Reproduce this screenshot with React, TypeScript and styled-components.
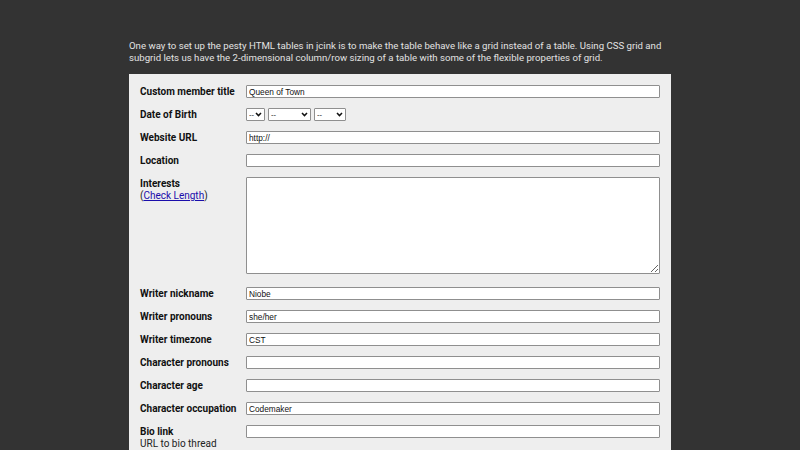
import React from "react";
import styled, { createGlobalStyle } from "styled-components";

const GlobalStyle = createGlobalStyle`
  html, body {
    margin: 0;
    padding: 0;
    background: #333333;
  }
`;

type Field = {
  label: string;
  value?: string;
  note?: string;
};

const topFields: Field[] = [
  { label: "Website URL", value: "http://" },
  { label: "Location" }
];

const bottomFields: Field[] = [
  { label: "Writer nickname", value: "Niobe" },
  { label: "Writer pronouns", value: "she/her" },
  { label: "Writer timezone", value: "CST" },
  { label: "Character pronouns" },
  { label: "Character age" },
  { label: "Character occupation", value: "Codemaker" },
  { label: "Bio link", note: "URL to bio thread" }
];

function Chevron() {
  return (
    <svg width="7" height="5" viewBox="0 0 7 5">
      <path d="M1 1 L3.5 3.6 L6 1" fill="none" stroke="#111" strokeWidth="1.5" />
    </svg>
  );
}

function DateSelect({ width }: { width: number }) {
  return (
    <SelectWrap $w={width}>
      <Select>
        <option>--</option>
      </Select>
      <Arrow>
        <Chevron />
      </Arrow>
    </SelectWrap>
  );
}

function App() {
  return (
    <Page>
      <GlobalStyle />
      <Intro>
        One way to set up the pesty HTML tables in jcink is to make the table
        behave like a grid instead of a table. Using CSS grid and subgrid lets
        us have the 2-dimensional column/row sizing of a table with some of the
        flexible properties of grid.
      </Intro>
      <Panel>
        <Label>Custom member title</Label>
        <TextInput defaultValue="Queen of Town" />

        <Label>Date of Birth</Label>
        <Selects>
          <DateSelect width={19} />
          <DateSelect width={43} />
          <DateSelect width={32} />
        </Selects>

        {topFields.map(f => (
          <React.Fragment key={f.label}>
            <Label>{f.label}</Label>
            <TextInput defaultValue={f.value} />
          </React.Fragment>
        ))}

        <Label $top>
          Interests
          <Note>
            (<LengthLink href="#">Check Length</LengthLink>)
          </Note>
        </Label>
        <TextArea />

        {bottomFields.map(f => (
          <React.Fragment key={f.label}>
            <Label $top={!!f.note}>
              {f.label}
              {f.note && <Note>{f.note}</Note>}
            </Label>
            <TextInput $top={!!f.note} defaultValue={f.value} />
          </React.Fragment>
        ))}
      </Panel>
    </Page>
  );
}

const Page = styled.div`
  width: 542px;
  margin: 0 auto;
  padding-top: 40px;
  font-family: Roboto, "Liberation Sans", sans-serif;
`;

const Intro = styled.p`
  margin: 0 0 11px;
  color: #e2e2e2;
  font-size: 9.65px;
  line-height: 11.5px;
`;

const Panel = styled.div`
  background: #eeeeee;
  padding: 11px 11px 20px;
  display: grid;
  grid-template-columns: 106px 1fr;
  row-gap: 10px;
  align-items: center;
`;

const Label = styled.div<{ $top?: boolean }>`
  font-size: 10px;
  font-weight: 700;
  line-height: 12px;
  color: #111;
  white-space: nowrap;
  align-self: ${p => (p.$top ? "start" : "center")};
  margin-top: ${p => (p.$top ? "1px" : "0")};
`;

const Note = styled.span`
  display: block;
  font-weight: 400;
  color: #222;
`;

const LengthLink = styled.a`
  color: #1a0dab;
  text-decoration: underline;
`;

const TextInput = styled.input<{ $top?: boolean }>`
  box-sizing: border-box;
  height: 13px;
  width: 100%;
  margin: 0;
  padding: 0 2px;
  border: 1px solid #8f8f8f;
  border-radius: 1px;
  background: #fff;
  font-family: "Liberation Sans", Arial, sans-serif;
  font-size: 8.3px;
  color: #111;
  align-self: ${p => (p.$top ? "start" : "center")};
`;

const TextArea = styled.textarea`
  box-sizing: border-box;
  display: block;
  width: 100%;
  height: 97px;
  margin: 0 0 3px;
  border: 1px solid #8f8f8f;
  border-radius: 1px;
  background: #fff;
`;

const Selects = styled.div`
  display: flex;
  gap: 3px;
`;

const SelectWrap = styled.div<{ $w: number }>`
  position: relative;
  width: ${p => p.$w}px;
  height: 13px;
`;

const Select = styled.select`
  box-sizing: border-box;
  appearance: none;
  display: block;
  width: 100%;
  height: 13px;
  margin: 0;
  padding: 0 0 0 2px;
  border: 1px solid #8f8f8f;
  border-radius: 1px;
  background: #fff;
  font-family: "Liberation Sans", Arial, sans-serif;
  font-size: 7.5px;
  color: #111;
`;

const Arrow = styled.span`
  position: absolute;
  right: 3px;
  top: 4px;
  display: flex;
  pointer-events: none;
`;

export default App;
